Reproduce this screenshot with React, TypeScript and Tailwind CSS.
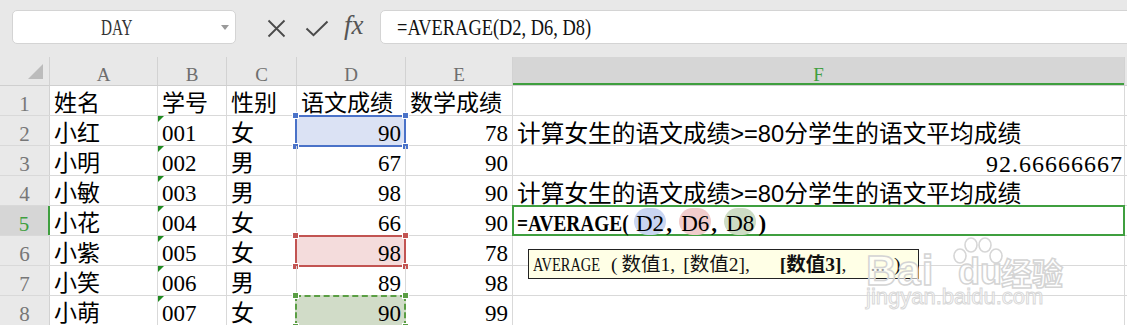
import React from "react";

const W = [
  "w-[50px]",
  "w-[108px]",
  "w-[69px]",
  "w-[70px]",
  "w-[109px]",
  "w-[107px]",
  "w-[612px]",
  "w-[10px]",
];

const data = [
  ["姓名", "学号", "性别", "语文成绩", "数学成绩"],
  ["小红", "001", "女", "90", "78"],
  ["小明", "002", "男", "67", "90"],
  ["小敏", "003", "男", "98", "90"],
  ["小花", "004", "女", "66", "90"],
  ["小紫", "005", "女", "98", "78"],
  ["小笑", "006", "男", "89", "98"],
  ["小萌", "007", "女", "90", "99"],
];

const SENTENCE = "计算女生的语文成绩>=80分学生的语文平均成绩";

function Narrow({ w, s, children }: { w: string; s: string; children: React.ReactNode }) {
  return (
    <span className={`inline-block whitespace-nowrap ${w}`}>
      <span className={`inline-block origin-left ${s}`}>{children}</span>
    </span>
  );
}

function Cell({
  w,
  right,
  className = "",
  children,
}: {
  w: string;
  right?: boolean;
  className?: string;
  children?: React.ReactNode;
}) {
  return (
    <div
      className={`relative h-full shrink-0 border-r border-[#d9d9d9] flex items-end leading-[22px] whitespace-nowrap ${w} ${
        right ? "justify-end pr-[4px]" : "pl-[4px]"
      } ${className}`}
    >
      {children}
    </div>
  );
}

function Handles({ color }: { color: string }) {
  const h = `absolute w-[7px] h-[7px] border border-white ${color}`;
  return (
    <>
      <div className={`${h} -left-[5px] -top-[5px]`} />
      <div className={`${h} -right-[5px] -top-[5px]`} />
      <div className={`${h} -left-[5px] -bottom-[5px]`} />
      <div className={`${h} -right-[5px] -bottom-[5px]`} />
    </>
  );
}

function Sel({ kind }: { kind: "blue" | "red" | "green" }) {
  if (kind === "blue")
    return (
      <div className="absolute -left-[2px] -top-[1px] -right-[1px] -bottom-[2px] border-2 border-[#4a72c8] bg-[#dbe2f4]">
        <Handles color="bg-[#4a72c8]" />
      </div>
    );
  if (kind === "red")
    return (
      <div className="absolute -left-[2px] -top-[1px] -right-[1px] -bottom-[2px] border-2 border-[#c25452] bg-[#f4dcdc]">
        <Handles color="bg-[#c25452]" />
      </div>
    );
  return (
    <div className="absolute -left-[2px] -top-[1px] -right-[1px] -bottom-[2px] border-2 border-dashed border-[#5a9e44] bg-[#d1dcc8]">
      <Handles color="bg-[#5a9e44]" />
    </div>
  );
}

function GreenMark() {
  return (
    <div className="absolute left-0 top-0 w-0 h-0 border-t-[6px] border-t-[#1f8a1f] border-r-[6px] border-r-transparent" />
  );
}

function FormulaCell() {
  return (
    <span className="relative flex items-end">
      <span className="font-bold">
        <Narrow w="w-[114px]" s="scale-x-[0.84]">=AVERAGE(</Narrow>
      </span>
      <span className="ml-[3px] inline-flex h-[27px] items-end rounded-[14px] bg-[#c9d5f1] px-[2px] font-normal">D2</span>
      <span className="font-bold w-[13px]">,</span>
      <span className="inline-flex h-[27px] items-end rounded-[14px] bg-[#f1cccc] px-[2px] font-normal">D6</span>
      <span className="font-bold w-[13px]">,</span>
      <span className="inline-flex h-[27px] items-end rounded-[14px] bg-[#cddcc4] px-[2px] font-normal">D8</span>
      <span className="font-bold ml-[2px]">)</span>
    </span>
  );
}

function DataRow({ r }: { r: number }) {
  const row = data[r];
  const num = r + 1;
  const isSel = num === 5;
  return (
    <div className="flex h-[30px] border-b border-[#d9d9d9]">
      <div
        className={`h-full shrink-0 flex items-end justify-center leading-[22px] text-[21px] ${W[0]} ${
          isSel
            ? "bg-[#d6d6d6] text-[#3f9f3f] border-r-2 border-[#3f9f3f]"
            : "bg-[#e9e9e9] text-[#777777] border-r border-[#d2d2d2]"
        }`}
      >
        {num}
      </div>
      <Cell w={W[1]}>{row[0]}</Cell>
      <Cell w={W[2]}>
        {num > 1 && <GreenMark />}
        {row[1]}
      </Cell>
      <Cell w={W[3]}>{row[2]}</Cell>
      <Cell w={W[4]} right={num > 1}>
        {num === 2 && <Sel kind="blue" />}
        {num === 6 && <Sel kind="red" />}
        {num === 8 && <Sel kind="green" />}
        <span className="relative">{row[3]}</span>
      </Cell>
      <Cell w={W[5]} right={num > 1}>
        {row[4]}
      </Cell>
      <Cell w={W[6]} right={num === 3} className={num === 3 ? "!pr-[1px]" : ""}>
        {(num === 2 || num === 4) && (
          <span className="text-[23.7px] font-['Liberation_Sans','Noto_Sans_CJK_SC',sans-serif]">{SENTENCE}</span>
        )}
        {num === 3 && <span className="tracking-[1px] text-[24px]">92.66666667</span>}
        {num === 5 && (
          <>
            <div className="absolute -left-[1px] -top-[1px] right-[-1px] -bottom-[1px] border-2 border-[#3f9f3f]" />
            <FormulaCell />
          </>
        )}
      </Cell>
      <Cell w={W[7]} />
    </div>
  );
}

function HeaderRow() {
  const letters = ["A", "B", "C", "D", "E", "F", "G"];
  return (
    <div className="flex h-[29px] border-b border-[#cfcfcf] bg-[#e8e8e8]">
      <div className={`relative h-full shrink-0 border-r border-[#d2d2d2] ${W[0]}`}>
        <svg className="absolute left-[28px] top-[7px]" width="16" height="15" viewBox="0 0 16 15">
          <polygon points="15,0 15,15 0,15" fill="#bcbcbc" />
        </svg>
      </div>
      {letters.map((l, i) => (
        <div
          key={l}
          className={`relative h-full shrink-0 border-r border-[#d2d2d2] flex items-end justify-center leading-[20px] text-[19px] overflow-hidden ${
            W[i + 1]
          } ${l === "F" ? "bg-[#d6d6d6] text-[#3f9f3f]" : "text-[#6e6e6e]"}`}
        >
          {l !== "G" && <span className="relative">{l}</span>}
          {l === "F" && <div className="absolute left-0 right-0 bottom-[-1px] h-[3px] bg-[#3f9f3f]" />}
        </div>
      ))}
    </div>
  );
}

function Toolbar() {
  return (
    <div className="flex h-[57px] items-start bg-[#e8e8e8] pt-[10px] pl-[12px]">
      <div className="flex h-[34px] w-[224px] shrink-0 items-center rounded-[5px] border border-[#d4d4d4] bg-white">
        <div className="flex-1 flex justify-center text-[23px] text-[#333] leading-none">
          <Narrow w="w-[32px]" s="scale-x-[0.66]">DAY</Narrow>
        </div>
        <svg className="mr-[6px]" width="8" height="5" viewBox="0 0 8 5">
          <polygon points="0,0 8,0 4,5" fill="#9a9a9a" />
        </svg>
      </div>
      <div className="ml-[31px] mt-[8px] flex items-center">
        <svg width="19" height="19" viewBox="0 0 19 19">
          <path d="M1.5 1.5 L17.5 17.5 M17.5 1.5 L1.5 17.5" stroke="#4a4a4a" strokeWidth="1.8" fill="none" />
        </svg>
        <svg className="ml-[19px]" width="24" height="17" viewBox="0 0 24 17">
          <path d="M1.5 8.5 L8.5 15.2 L22.5 1.5" stroke="#4a4a4a" strokeWidth="2" fill="none" />
        </svg>
        <span className="ml-[15px] -mt-[6px] w-[24px] text-[27px] italic text-[#555] leading-none font-['Liberation_Serif',serif]">
          fx
        </span>
      </div>
      <div className="ml-[12px] flex h-[34px] w-[800px] shrink-0 items-center rounded-[5px] border border-[#d4d4d4] bg-white pl-[16px] text-[23px] text-[#111] leading-none">
        <Narrow w="w-[200px]" s="scale-x-[0.80]">=AVERAGE(D2, D6, D8)</Narrow>
      </div>
    </div>
  );
}

function Tooltip() {
  return (
    <div className="absolute left-[528px] top-[249px] flex h-[30px] w-[391px] items-end border border-[#222] bg-[#ffffe6] pl-[4px] pb-[3px] text-[19.5px] leading-[20px] text-[#111] whitespace-nowrap">
      <Narrow w="w-[68px]" s="scale-x-[0.74]">AVERAGE</Narrow>
      <span className="ml-[10px]">(</span>
      <span className="ml-[4px]">数值1</span>
      <span>,</span>
      <span className="ml-[8px]">[数值2]</span>
      <span>,</span>
      <span className="ml-[30px] font-bold">[数值3]</span>
      <span>,</span>
      <span className="ml-[24px]">...</span>
      <span className="ml-[9px]">)</span>
    </div>
  );
}

function Watermark() {
  return (
    <div className="pointer-events-none absolute left-[862px] top-[236px] w-[210px] h-[75px] font-['Liberation_Sans',sans-serif]">
      <svg className="absolute left-[88px] top-[0px]" width="56" height="30" viewBox="0 0 56 30">
        <g fill="rgba(255,255,255,0.55)" stroke="#d6d6d6" strokeWidth="1.6">
          <ellipse cx="10" cy="20" rx="6" ry="7" />
          <ellipse cx="21" cy="9" rx="6" ry="7" />
          <ellipse cx="35" cy="9" rx="6" ry="7" />
          <ellipse cx="46" cy="20" rx="6" ry="7" />
        </g>
      </svg>
      <div className="absolute left-[4px] top-[20px] h-[30px] text-[42px] font-bold leading-[30px] text-[rgba(255,255,255,0.6)] [-webkit-text-stroke:1.5px_#d4d4d4] tracking-[1px]">
        Bai
      </div>
      <div className="absolute left-[96px] top-[22px] h-[28px] text-[36px] font-bold leading-[28px] text-[rgba(255,255,255,0.6)] [-webkit-text-stroke:1.5px_#d4d4d4]">
        du
      </div>
      <div className="absolute left-[139px] top-[21px] h-[29px] text-[31px] font-bold leading-[29px] text-[rgba(255,255,255,0.6)] [-webkit-text-stroke:1.5px_#d4d4d4] font-['Noto_Sans_CJK_SC',sans-serif]">
        经验
      </div>
      <div className="absolute left-[4px] top-[51px] h-[20px] text-[22px] leading-[20px] text-[rgba(255,255,255,0.5)] [-webkit-text-stroke:1px_#d8d8d8]">
        jingyan.baidu.com
      </div>
    </div>
  );
}

export default function App() {
  return (
    <div className="relative h-[325px] w-[1127px] overflow-hidden bg-white text-[23px] text-black font-['Liberation_Serif','Noto_Sans_CJK_SC',serif]">
      <Toolbar />
      <HeaderRow />
      {data.map((_, i) => (
        <DataRow key={i} r={i} />
      ))}
      <Tooltip />
      <Watermark />
    </div>
  );
}
